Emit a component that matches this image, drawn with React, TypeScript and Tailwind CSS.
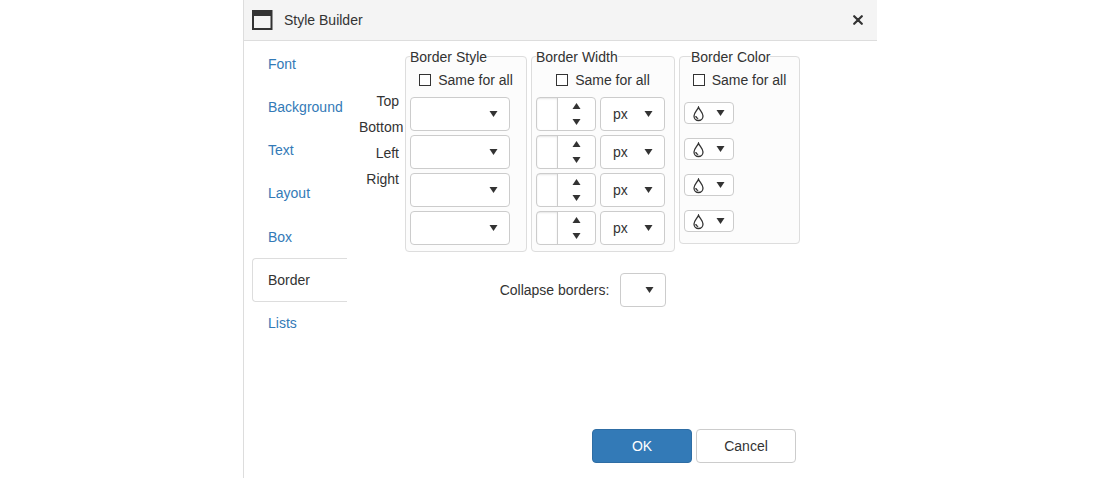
import { useState } from "react";

const tabs = ["Font", "Background", "Text", "Layout", "Box", "Border", "Lists"];
const sides = ["Top", "Bottom", "Left", "Right"];
const borderStyles = ["", "none", "solid", "dashed", "dotted", "double"];
const units = ["px", "pt", "em", "%"];

function Caret({ up = false, className = "" }: { up?: boolean; className?: string }) {
    return (
        <svg
            width="9"
            height="6"
            viewBox="0 0 9 6"
            fill="currentColor"
            className={className}
            aria-hidden="true"
        >
            <path d={up ? "M0.5 6h8L4.5 0z" : "M0.5 0h8L4.5 6z"} />
        </svg>
    );
}

function Dropdown({
    id,
    label,
    options,
    className,
}: {
    id?: string;
    label?: string;
    options: string[];
    className: string;
}) {
    return (
        <div className={`relative h-[34px] ${className}`}>
            <select
                id={id}
                aria-label={label}
                className="h-full w-full appearance-none rounded border border-[#ccc] bg-white px-3"
            >
                {options.map((option) => (
                    <option key={option} value={option}>
                        {option}
                    </option>
                ))}
            </select>
            <Caret className="pointer-events-none absolute top-[14px] right-3" />
        </div>
    );
}

function NumberBox({ label }: { label: string }) {
    const [value, setValue] = useState("");
    const step = (amount: number) =>
        setValue(String(Math.max(0, Number(value) + amount)));

    return (
        <div className="flex h-[34px] w-[60px] overflow-hidden rounded border border-[#ccc] bg-white">
            <input
                type="text"
                aria-label={label}
                value={value}
                onChange={(e) => setValue(e.target.value)}
                className="w-[21px] border-r border-[#ccc] px-1 shadow-[inset_0_1px_2px_rgba(0,0,0,0.1)]"
            />
            <div className="flex flex-1 flex-col">
                <button
                    type="button"
                    aria-label={`Increase ${label}`}
                    onClick={() => step(1)}
                    className="flex flex-1 items-center justify-center"
                >
                    <Caret up />
                </button>
                <button
                    type="button"
                    aria-label={`Decrease ${label}`}
                    onClick={() => step(-1)}
                    className="flex flex-1 items-center justify-center"
                >
                    <Caret />
                </button>
            </div>
        </div>
    );
}

function ColorButton({ label }: { label: string }) {
    return (
        <button
            type="button"
            aria-label={label}
            className="flex h-[22px] w-[50px] items-center justify-between rounded border border-[#ccc] bg-white px-2"
        >
            <svg
                width="12"
                height="16"
                viewBox="0 0 12 16"
                fill="none"
                stroke="currentColor"
                className="mt-0.5"
                aria-hidden="true"
            >
                <path
                    d="M5.5 1.2C4.6 3.8 1 6.8 1 10a4.5 4.5 0 0 0 9 0C10 6.8 6.4 3.8 5.5 1.2z"
                    strokeWidth="1.3"
                />
                <path d="M2.8 10c.1 1.5 1 2.3 2.4 2.6" strokeWidth="1.4" />
            </svg>
            <Caret />
        </button>
    );
}

function Group({
    id,
    title,
    className,
    legendClassName = "",
    children,
}: {
    id: string;
    title: string;
    className: string;
    legendClassName?: string;
    children: React.ReactNode;
}) {
    return (
        <fieldset
            className={`rounded border border-[#ddd] bg-[#fcfcfc] px-1 ${className}`}
        >
            <legend className={`pt-0.5 leading-5 ${legendClassName}`}>{title}</legend>
            <div className="mt-[3px] flex items-center justify-center gap-[7px]">
                <input
                    id={id}
                    type="checkbox"
                    className="size-3 appearance-none border border-[#333] bg-white checked:bg-[#333]"
                />
                <label htmlFor={id}>Same for all</label>
            </div>
            {children}
        </fieldset>
    );
}

export default function App() {
    const [activeTab, setActiveTab] = useState("Border");

    return (
        <div className="mx-auto flex min-h-screen max-w-[634px] flex-col border-l border-[#ddd] bg-white font-['Liberation_Sans',Arial,sans-serif] text-sm leading-5 text-[#333]">
            <header className="flex h-[41px] items-center border-b border-[#ddd] bg-[#f4f4f4] pr-[11px] pl-2">
                <svg width="21" height="20" viewBox="0 0 21 20" aria-hidden="true">
                    <path d="M0 0h20.5v20H0zM2 6v12h16.5V6z" fill="#333" fillRule="evenodd" />
                </svg>
                <h1 className="ml-[11px]">Style Builder</h1>
                <button
                    type="button"
                    aria-label="Close"
                    className="ml-auto flex size-4 items-center justify-center"
                >
                    <svg width="10" height="10" viewBox="0 0 10 10" aria-hidden="true">
                        <path
                            d="M1.2 1.2l7.6 7.6M8.8 1.2l-7.6 7.6"
                            stroke="#333"
                            strokeWidth="2.2"
                            strokeLinecap="round"
                        />
                    </svg>
                </button>
            </header>

            <div className="flex flex-1">
                <nav className="mt-px ml-2 grid h-[303px] w-[95px] shrink-0 auto-rows-fr">
                    {tabs.map((tab) => (
                        <button
                            key={tab}
                            type="button"
                            onClick={() => setActiveTab(tab)}
                            className={
                                tab === activeTab
                                    ? "rounded-l border border-r-0 border-[#ddd] pl-[15px] text-left"
                                    : "border border-transparent pl-[15px] text-left text-[#337ab7]"
                            }
                        >
                            {tab}
                        </button>
                    ))}
                </nav>

                <form
                    className="ml-3 flex flex-1 flex-col"
                    onSubmit={(e) => e.preventDefault()}
                >
                    <div className="flex items-start pt-1">
                        <ul className="mr-[6px] w-10 pt-[46px]">
                            {sides.map((side) => (
                                <li key={side} className="mb-[6px] text-right">
                                    {side}
                                </li>
                            ))}
                        </ul>
                        <div className="flex items-start gap-1">
                            <Group id="same-style" title="Border Style" className="w-[122px] pb-[6px]">
                                <div className="mt-[7px] flex flex-col gap-1">
                                    {sides.map((side) => (
                                        <Dropdown
                                            key={side}
                                            label={`${side} border style`}
                                            options={borderStyles}
                                            className="w-[100px]"
                                        />
                                    ))}
                                </div>
                            </Group>
                            <Group id="same-width" title="Border Width" className="w-[144px] pb-[6px]">
                                <div className="mt-[7px] flex flex-col gap-1">
                                    {sides.map((side) => (
                                        <div key={side} className="flex gap-1">
                                            <NumberBox label={`${side} border width`} />
                                            <Dropdown
                                                label={`${side} border unit`}
                                                options={units}
                                                className="w-[65px]"
                                            />
                                        </div>
                                    ))}
                                </div>
                            </Group>
                            <Group
                                id="same-color"
                                title="Border Color"
                                className="w-[121px] pb-[11px]"
                                legendClassName="ml-[7px]"
                            >
                                <div className="mt-3 flex flex-col gap-[14px]">
                                    {sides.map((side) => (
                                        <ColorButton key={side} label={`${side} border color`} />
                                    ))}
                                </div>
                            </Group>
                        </div>
                    </div>

                    <div className="mt-[21px] mr-[70px] flex items-center justify-center gap-[11px]">
                        <label htmlFor="collapse-borders">Collapse borders:</label>
                        <Dropdown
                            id="collapse-borders"
                            options={["", "collapse", "separate"]}
                            className="w-[46px]"
                        />
                    </div>

                    <div className="mt-auto flex justify-end gap-1 pr-[81px] pb-[15px]">
                        <button
                            type="submit"
                            className="h-[34px] w-[100px] rounded border border-[#2e6da4] bg-[#337ab7] text-white"
                        >
                            OK
                        </button>
                        <button
                            type="button"
                            className="h-[34px] w-[100px] rounded border border-[#ccc] bg-white"
                        >
                            Cancel
                        </button>
                    </div>
                </form>
            </div>
        </div>
    );
}
